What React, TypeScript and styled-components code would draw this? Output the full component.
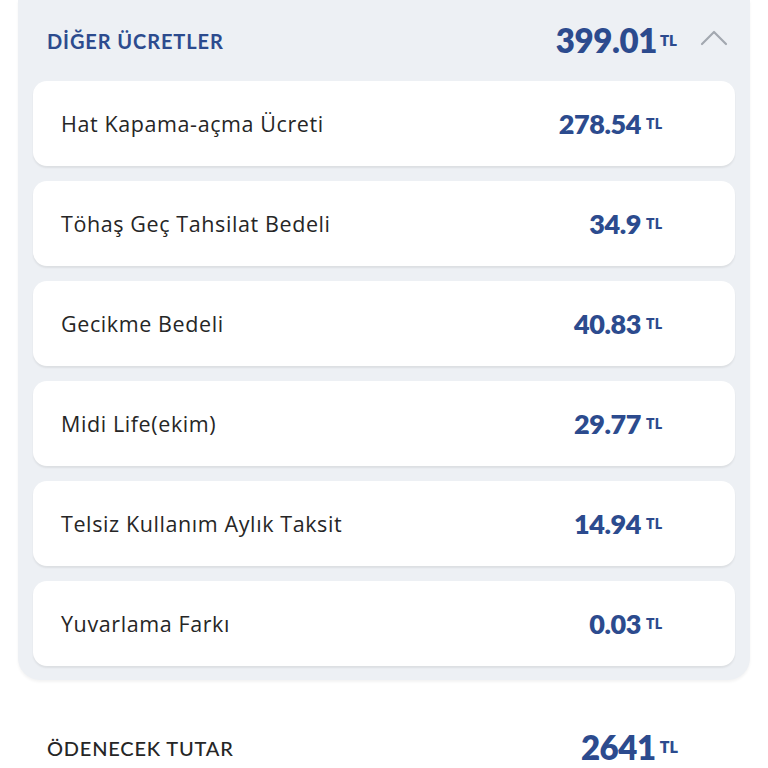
import React from "react";
import styled, { createGlobalStyle } from "styled-components";

const Global = createGlobalStyle`
  html, body {
    margin: 0;
    padding: 0;
    background: #ffffff;
    font-family: Lato, "Noto Sans", Arial, sans-serif;
  }
`;

const Page = styled.div`
  width: 768px;
  height: 768px;
  overflow: hidden;
  display: flex;
  flex-direction: column;
`;

const Panel = styled.section`
  margin: 0 18px;
  padding: 0 15px 14px;
  background: #edf0f4;
  border-radius: 0 0 22px 22px;
  box-shadow: 0 2px 3px rgba(0, 0, 0, 0.05);
`;

const PanelHeader = styled.div`
  height: 81px;
  display: flex;
  align-items: center;
  padding: 0 6px 0 14px;
`;

const PanelTitle = styled.h2`
  margin: 0;
  flex: 1;
  font-size: 20px;
  font-weight: 700;
  color: #2c4b8e;
  letter-spacing: 0.9px;
`;

const Amount = styled.span<{ $size: number; $unit: number; $gap: number }>`
  display: inline-flex;
  align-items: baseline;
  color: #2c4b8e;
  font-weight: 800;
  font-size: ${(p) => p.$size}px;
  line-height: 0.95;
  letter-spacing: -0.4px;
  small {
    font-size: ${(p) => p.$unit}px;
    font-weight: 800;
    margin-left: ${(p) => p.$gap}px;
    letter-spacing: 0;
    transform: translateY(-${(p) => Math.round(p.$size * 0.2)}px);
  }
`;

const Chevron = styled.svg`
  width: 30px;
  height: 20px;
  margin-left: 22px;
  margin-top: -6px;
`;

const CardList = styled.div`
  display: flex;
  flex-direction: column;
  gap: 15px;
`;

const Card = styled.div`
  height: 85px;
  background: #ffffff;
  border-radius: 14px;
  box-shadow: 0 2px 2px rgba(0, 0, 0, 0.07);
  display: flex;
  align-items: center;
  padding: 0 73px 0 28px;
`;

const Label = styled.span`
  flex: 1;
  font-family: "Open Sans", Lato, sans-serif;
  font-size: 21.5px;
  color: #262626;
  font-weight: 500;
  letter-spacing: 0.6px;
`;

const Footer = styled.div`
  margin-top: 52px;
  display: flex;
  align-items: center;
  padding: 0 90px 0 47px;
`;

const FooterLabel = styled.span`
  flex: 1;
  font-size: 20px;
  color: #262626;
  font-weight: 500;
  letter-spacing: 0.8px;
`;

const items: [string, string][] = [
  ["Hat Kapama-açma Ücreti", "278.54"],
  ["Töhaş Geç Tahsilat Bedeli", "34.9"],
  ["Gecikme Bedeli", "40.83"],
  ["Midi Life(ekim)", "29.77"],
  ["Telsiz Kullanım Aylık Taksit", "14.94"],
  ["Yuvarlama Farkı", "0.03"],
];

export default function App() {
  return (
    <Page>
      <Global />
      <Panel>
        <PanelHeader>
          <PanelTitle>DİĞER ÜCRETLER</PanelTitle>
          <Amount $size={33} $unit={15} $gap={3}>
            399.01<small>TL</small>
          </Amount>
          <Chevron viewBox="0 0 30 20">
            <path
              d="M3 16 L15 4 L27 16"
              fill="none"
              stroke="#a3a8b0"
              strokeWidth="2.2"
              strokeLinecap="round"
              strokeLinejoin="round"
            />
          </Chevron>
        </PanelHeader>
        <CardList>
          {items.map(([label, value]) => (
            <Card key={label}>
              <Label>{label}</Label>
              <Amount $size={27} $unit={14} $gap={5}>
                {value}
                <small>TL</small>
              </Amount>
            </Card>
          ))}
        </CardList>
      </Panel>
      <Footer>
        <FooterLabel>ÖDENECEK TUTAR</FooterLabel>
        <Amount $size={33} $unit={16} $gap={4}>
          2641<small>TL</small>
        </Amount>
      </Footer>
    </Page>
  );
}
